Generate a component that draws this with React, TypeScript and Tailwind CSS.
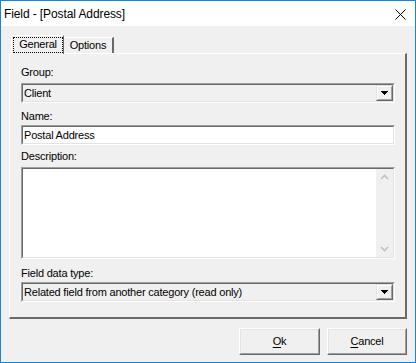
import React from "react";

function Sunken({ className = "", inner = "", children }: { className?: string; inner?: string; children?: React.ReactNode }) {
    return (
        <div className={`border border-t-[#a0a0a0] border-l-[#a0a0a0] border-r-white border-b-white ${className}`}>
            <div className={`h-full border border-t-[#696969] border-l-[#696969] border-r-[#e3e3e3] border-b-[#e3e3e3] ${inner}`}>
                {children}
            </div>
        </div>
    );
}

function DropButton() {
    return (
        <div className="w-[17px] h-full border border-t-[#e3e3e3] border-l-[#e3e3e3] border-r-[#696969] border-b-[#696969]">
            <div className="h-full flex items-center justify-center border border-t-white border-l-white border-r-[#a0a0a0] border-b-[#a0a0a0] bg-[#f0f0f0]">
                <svg width="7" height="4" viewBox="0 0 7 4" className="block">
                    <path d="M0 0h7v1H6v1H5v1H4v1H3V3H2V2H1V1H0z" fill="#000" />
                </svg>
            </div>
        </div>
    );
}

function Combo({ value }: { value: string }) {
    return (
        <Sunken className="h-[20px]" inner="flex items-center bg-[#f0f0f0]">
            <span className="flex-1 pl-[1px] truncate leading-[16px]">{value}</span>
            <DropButton />
        </Sunken>
    );
}

function Label({ text, className = "" }: { text: string; className?: string }) {
    return <div className={`h-[13px] leading-[13px] ${className}`}>{text}</div>;
}

function Button({ children, className = "" }: { children: React.ReactNode; className?: string }) {
    return (
        <div className={`h-[27px] border border-t-white border-l-white border-r-[#696969] border-b-[#696969] ${className}`}>
            <div className="h-full flex items-center justify-center border border-t-[#e3e3e3] border-l-[#e3e3e3] border-r-[#a0a0a0] border-b-[#a0a0a0] bg-[#f0f0f0]">
                {children}
            </div>
        </div>
    );
}

export default function App() {
    return (
        <div className="w-[416px] h-[363px] flex flex-col border border-[#1883d7] bg-[#f0f0f0] text-black text-[11px] tracking-[-0.2px] font-['Liberation_Sans',Arial,sans-serif]">
            {/* title bar */}
            <div className="h-[25px] shrink-0 bg-white flex items-center justify-between pl-[3px] pr-[9px]">
                <span className="text-[12px] leading-[14px] tracking-[-0.1px]">Field - [Postal Address]</span>
                <svg width="11" height="11" viewBox="0 0 11 11" className="block mt-[2px]">
                    <path d="M0.5 0.5L10.5 10.5M10.5 0.5L0.5 10.5" stroke="#000" strokeWidth="1" />
                </svg>
            </div>

            <div className="flex-1 flex flex-col pt-[9px] pl-[8px] pr-[8px]">
                {/* tabs */}
                <div className="flex items-end h-[18px] pl-[2px]">
                    <div className="relative z-10 h-[19px] w-[53px] -mb-px bg-[#f0f0f0] border-t border-l border-t-white border-l-white border-r border-r-[#696969] flex">
                        <div className="flex-1 m-[1px] mr-0 border border-dotted border-black flex items-center justify-center leading-[13px] pb-[1px]">
                            General
                        </div>
                    </div>
                    <div className="h-[16px] w-[50px] border-t border-t-white border-r-2 border-r-[#696969] flex items-center justify-center leading-[13px]">
                        Options
                    </div>
                </div>

                {/* panel */}
                <div className="h-[266px] border-t border-l border-t-white border-l-white border-r-2 border-b-2 border-r-[#696969] border-b-[#696969] pl-[11px] pr-[10px] pt-[12px] flex flex-col">
                    <Label text="Group:" />
                    <div className="mt-[4px]">
                        <Combo value="Client" />
                    </div>

                    <Label text="Name:" className="mt-[7px]" />
                    <Sunken className="mt-[2px] h-[20px]" inner="flex items-center bg-white">
                        <span className="pl-[1px] leading-[16px]">Postal Address</span>
                    </Sunken>

                    <Label text="Description:" className="mt-[5px]" />
                    <Sunken className="mt-[4px] h-[92px]" inner="flex bg-white">
                        <div className="flex-1" />
                        <div className="w-[17px] bg-[#f0f0f0] flex flex-col items-center justify-between py-[5px]">
                            <svg width="9" height="6" viewBox="0 0 9 6" className="block">
                                <path d="M1 5L4.5 1.5L8 5" stroke="#c0c0c0" strokeWidth="1.6" fill="none" />
                            </svg>
                            <svg width="9" height="6" viewBox="0 0 9 6" className="block">
                                <path d="M1 1L4.5 4.5L8 1" stroke="#c0c0c0" strokeWidth="1.6" fill="none" />
                            </svg>
                        </div>
                    </Sunken>

                    <Label text="Field data type:" className="mt-[8px]" />
                    <div className="mt-[2px]">
                        <Combo value="Related field from another category (read only)" />
                    </div>
                </div>

                {/* buttons */}
                <div className="flex justify-end gap-[7px] mt-[9px]">
                    <Button className="w-[81px]">
                        <span>
                            <span className="underline underline-offset-[2px]">O</span>k
                        </span>
                    </Button>
                    <Button className="w-[80px]">
                        <span>
                            <span className="underline underline-offset-[2px]">C</span>ancel
                        </span>
                    </Button>
                </div>
            </div>
        </div>
    );
}
